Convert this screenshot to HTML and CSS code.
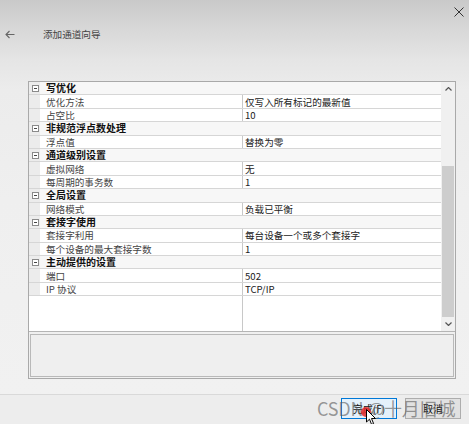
FILE: index.html
```html
<!DOCTYPE html>
<html lang="zh">
<head>
<meta charset="utf-8">
<link rel="stylesheet" href="styles.css">
</head>
<body>
<div class="window">
  <div class="titlebar">
    <svg class="close" width="10" height="10" viewBox="0 0 10 10"><path d="M0.5 0.5 L9.5 9.5 M9.5 0.5 L0.5 9.5" stroke="#333" stroke-width="1" fill="none"/></svg>
  </div>
  <div class="header">
    <svg class="back" width="10" height="9" viewBox="0 0 10 9"><path d="M9.5 4.5 H1 M4.5 1 L1 4.5 L4.5 8" stroke="#666" stroke-width="1.1" fill="none"/></svg>
    <span class="title">添加通道向导</span>
  </div>
  <div class="content">
    <div class="box">
      <div class="gridarea">
        <div class="list">
          <div class="row cat"><span class="gut"><i class="minus"></i></span><span class="catname">写优化</span></div>
          <div class="row"><span class="gut"></span><span class="name">优化方法</span><span class="val">仅写入所有标记的最新值</span></div>
          <div class="row"><span class="gut"></span><span class="name">占空比</span><span class="val">10</span></div>
          <div class="row cat"><span class="gut"><i class="minus"></i></span><span class="catname">非规范浮点数处理</span></div>
          <div class="row"><span class="gut"></span><span class="name">浮点值</span><span class="val">替换为零</span></div>
          <div class="row cat"><span class="gut"><i class="minus"></i></span><span class="catname">通道级别设置</span></div>
          <div class="row"><span class="gut"></span><span class="name">虚拟网络</span><span class="val">无</span></div>
          <div class="row"><span class="gut"></span><span class="name">每周期的事务数</span><span class="val">1</span></div>
          <div class="row cat"><span class="gut"><i class="minus"></i></span><span class="catname">全局设置</span></div>
          <div class="row"><span class="gut"></span><span class="name">网络模式</span><span class="val">负载已平衡</span></div>
          <div class="row cat"><span class="gut"><i class="minus"></i></span><span class="catname">套接字使用</span></div>
          <div class="row"><span class="gut"></span><span class="name">套接字利用</span><span class="val">每台设备一个或多个套接字</span></div>
          <div class="row"><span class="gut"></span><span class="name">每个设备的最大套接字数</span><span class="val">1</span></div>
          <div class="row cat"><span class="gut"><i class="minus"></i></span><span class="catname">主动提供的设置</span></div>
          <div class="row"><span class="gut"></span><span class="name">端口</span><span class="val">502</span></div>
          <div class="row"><span class="gut"></span><span class="name">IP 协议</span><span class="val">TCP/IP</span></div>
          <div class="filler"><span class="fname"></span><span class="fval"></span></div>
        </div>
        <div class="scrollbar">
          <div class="sb-btn"><svg width="7" height="4" viewBox="0 0 7 4"><path d="M0.5 3.5 L3.5 0.5 L6.5 3.5" stroke="#555" stroke-width="1.2" fill="none"/></svg></div>
          <div class="sb-track"><div class="sb-thumb"></div></div>
          <div class="sb-btn"><svg width="7" height="4" viewBox="0 0 7 4"><path d="M0.5 0.5 L3.5 3.5 L6.5 0.5" stroke="#555" stroke-width="1.2" fill="none"/></svg></div>
        </div>
      </div>
      <div class="desc"></div>
    </div>
  </div>
  <div class="footer">
    <button class="btn primary">完成(F)</button>
    <button class="btn">取消</button>
    <div class="watermark">CSDN @十月旧城</div>
    <div class="clickdot"></div>
    <svg class="cursor" width="11" height="17" viewBox="0 0 11 17"><path d="M0.5 0.5 L0.5 13 L3.5 10.2 L5.6 15.5 L7.6 14.6 L5.5 9.5 L9.5 9.5 Z" fill="#fff" stroke="#000" stroke-width="1"/></svg>
  </div>
</div>
</body>
</html>
```
FILE: styles.css
```css
* { box-sizing: border-box; }
html, body { margin: 0; padding: 0; }
body {
  width: 469px;
  height: 424px;
  overflow: hidden;
  font-family: "Noto Sans CJK SC", "Liberation Sans", sans-serif;
}
.window {
  width: 469px;
  height: 424px;
  display: flex;
  flex-direction: column;
  background: linear-gradient(#c9c9c9 0px, #d8d8d8 30px, #e5e5e5 60px, #ececec 90px, #efefef 200px, #f1f1f1 394px);
}
.titlebar {
  height: 22px;
  display: flex;
  justify-content: flex-end;
  align-items: center;
  padding-right: 5px;
  padding-top: 1px;
}
.header {
  height: 24px;
  display: flex;
  align-items: center;
  padding-left: 5px;
}
.back { display: block; }
.title {
  margin-left: 28px;
  font-size: 9.6px;
  color: #444;
  line-height: 12px;
}
.content {
  padding-top: 35px;
  padding-left: 28px;
  height: 348px;
}
.box {
  width: 428px;
  height: 298px;
  border: 1px solid #a9a9a9;
  background: #f0f0f0;
  display: flex;
  flex-direction: column;
}
.gridarea {
  height: 250px;
  display: flex;
  background: #fff;
  border-bottom: 1px solid #b5b5b5;
}
.list {
  flex: 1;
  display: flex;
  flex-direction: column;
}
.row {
  height: 13.4px;
  display: flex;
  align-items: center;
  font-size: 9.6px;
  line-height: 12px;
  border-bottom: 1px solid #d6d6d6;
  background: #fff;
}
.row.cat { background: #f7f7f7; }
.gut {
  width: 11px;
  align-self: stretch;
  background: #ececec;
  display: flex;
  align-items: center;
  justify-content: flex-start;
  flex: none;
}
.minus {
  display: block;
  width: 7px;
  height: 7px;
  border: 1px solid #8a8a8a;
  background: #fff;
  position: relative;
  margin-left: 3px;
}
.minus::after {
  content: "";
  position: absolute;
  left: 1px;
  top: 2px;
  width: 3px;
  height: 1px;
  background: #444;
}
.catname {
  padding-left: 6px;
  font-size: 10px;
  font-weight: bold;
  color: #111;
  white-space: nowrap;
}
.name {
  width: 203px;
  align-self: stretch;
  padding-left: 6px;
  border-right: 1px solid #c8c8c8;
  color: #444;
  white-space: nowrap;
  flex: none;
  display: flex;
  align-items: center;
}
.val {
  padding-left: 2px;
  color: #222;
  white-space: nowrap;
}
.filler {
  flex: 1;
  display: flex;
}
.fname {
  width: 214px;
  border-right: 1px solid #c8c8c8;
  flex: none;
}
.scrollbar {
  width: 14px;
  background: #f0f0f0;
  display: flex;
  flex-direction: column;
  flex: none;
}
.sb-btn {
  height: 14px;
  display: flex;
  align-items: center;
  justify-content: center;
}
.sb-track {
  flex: 1;
  position: relative;
}
.sb-thumb {
  position: absolute;
  left: 1px;
  right: 1px;
  top: 70px;
  bottom: 0;
  background: #cdcdcd;
}
.desc {
  flex: 1;
  margin: 2px 1px 1px 1px;
  border: 1px solid #b9b9b9;
  background: #efefef;
}
.footer {
  flex: 1;
  border-top: 1px solid #d9d9d9;
  background: #ededed;
  display: flex;
  justify-content: flex-end;
  align-items: flex-start;
  padding-top: 3px;
  padding-right: 8px;
  gap: 8px;
  position: relative;
}
.btn {
  width: 56px;
  height: 21px;
  border: 1px solid #adadad;
  background: #e1e1e1;
  font-family: "Noto Sans CJK SC", sans-serif;
  font-size: 10px;
  color: #111;
  padding: 0;
}
.btn.primary {
  border: 1px solid #0078d7;
  background: #e5f1fb;
}
.watermark {
  position: absolute;
  left: 317px;
  top: 1px;
  font-family: "Noto Sans CJK SC", sans-serif;
  font-size: 18px;
  line-height: 24px;
  color: rgba(90, 90, 90, 0.6);
  white-space: nowrap;
  letter-spacing: -0.2px;
}
.clickdot {
  position: absolute;
  left: 361px;
  top: 12px;
  width: 10px;
  height: 10px;
  border-radius: 50%;
  background: rgba(230, 40, 40, 0.85);
}
.cursor {
  position: absolute;
  left: 366px;
  top: 14px;
}
```
